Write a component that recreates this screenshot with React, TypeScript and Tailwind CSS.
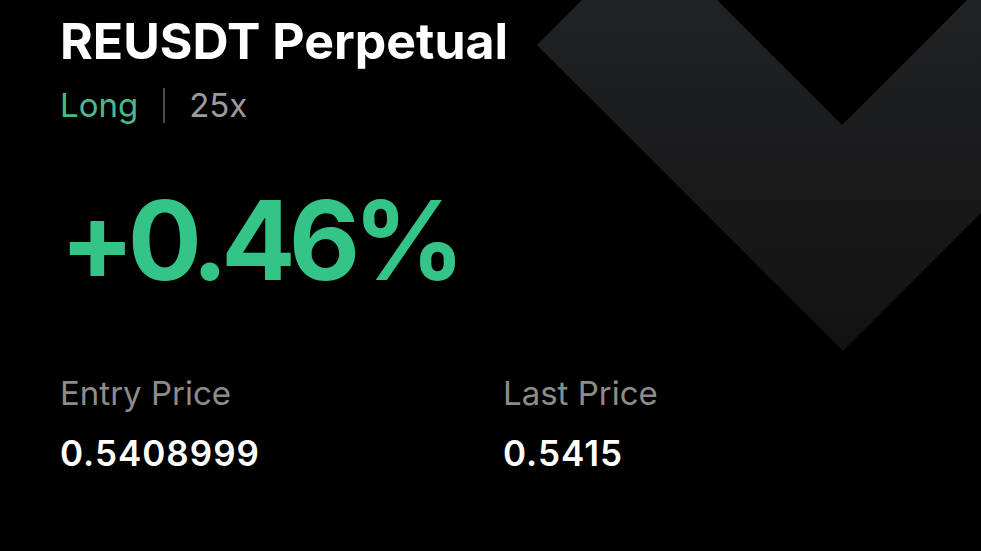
export default function App() {
  return (
    <div className="relative h-[551px] w-[981px] overflow-hidden bg-black font-['Inter',sans-serif]">
      {/* backdrop chevron */}
      <svg className="absolute left-0 top-0" width="981" height="551" viewBox="0 0 981 551">
        <defs>
          <linearGradient id="chev" x1="0" y1="0" x2="0" y2="1">
            <stop offset="0" stopColor="#212224" />
            <stop offset="1" stopColor="#121212" />
          </linearGradient>
        </defs>
        <polygon
          points="537,45 582,0 717,0 842,125 967,0 1100,0 1100,94 843,351"
          fill="url(#chev)"
        />
      </svg>

      <div className="relative flex flex-col pl-[60px] pt-[16px]">
        <h1 className="text-[50px] font-bold leading-none text-white">REUSDT Perpetual</h1>

        <div className="mt-[22px] flex items-center text-[33px] leading-none">
          <span className="text-[#4cb98a]">Long</span>
          <span className="ml-[25px] mr-[24px] h-[35px] w-[2px] bg-[#4a4a4a]" />
          <span className="text-[#9b9b9b]">25x</span>
        </div>

        <div className="mt-[62px] text-[110px] font-bold leading-none tracking-[-7px] text-[#35c488]">
          +0.46%
        </div>

        <div className="mt-[82px] flex">
          <div className="w-[443px]">
            <div className="text-[33px] leading-none text-[#8c8c8c]">Entry Price</div>
            <div className="mt-[26px] text-[35px] font-semibold leading-none tracking-[1px] text-white">
              0.5408999
            </div>
          </div>
          <div>
            <div className="text-[33px] leading-none text-[#8c8c8c]">Last Price</div>
            <div className="mt-[26px] text-[35px] font-semibold leading-none tracking-[1px] text-white">
              0.5415
            </div>
          </div>
        </div>
      </div>
    </div>
  );
}
